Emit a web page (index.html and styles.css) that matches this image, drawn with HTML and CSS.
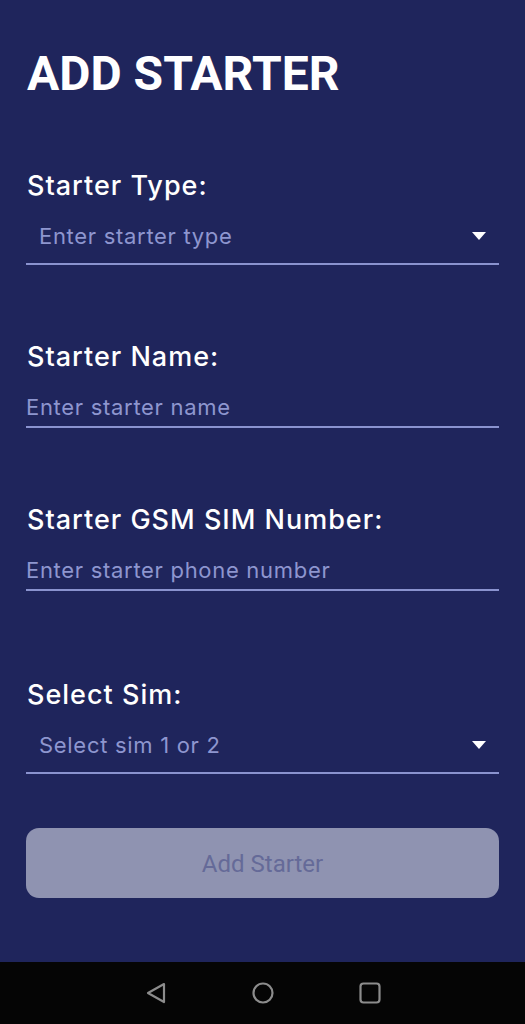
FILE: index.html
```html
<!DOCTYPE html>
<html lang="en">
<head>
  <meta charset="UTF-8" />
  <meta name="viewport" content="width=device-width, initial-scale=1.0" />
  <title>Add Starter</title>
  <link rel="stylesheet" href="styles.css">
</head>
<body>
  <!-- Form -->
  <main class="screen">
    <h1 class="title">ADD STARTER</h1>

    <div class="field">
      <div class="field-label">Starter Type:</div>
      <div class="field-input dropdown">
        <span class="placeholder">Enter starter type</span>
        <span class="arrow"></span>
      </div>
    </div>

    <div class="field">
      <div class="field-label">Starter Name:</div>
      <div class="field-input">
        <span class="placeholder">Enter starter name</span>
      </div>
    </div>

    <div class="field">
      <div class="field-label">Starter GSM SIM Number:</div>
      <div class="field-input">
        <span class="placeholder">Enter starter phone number</span>
      </div>
    </div>

    <div class="field field-sim">
      <div class="field-label">Select Sim:</div>
      <div class="field-input dropdown">
        <span class="placeholder">Select sim 1 or 2</span>
        <span class="arrow"></span>
      </div>
    </div>

    <button class="submit-button" disabled>Add Starter</button>
  </main>

  <!-- Barra di navigazione -->
  <nav class="nav-bar">
    <svg width="24" height="24" viewBox="0 0 24 24"><path d="M20 3 L4 12 L20 21 Z" fill="none" stroke="#8c8c8c" stroke-width="2.2" stroke-linejoin="round"/></svg>
    <svg width="24" height="24" viewBox="0 0 24 24"><circle cx="12" cy="12" r="9.5" fill="none" stroke="#8c8c8c" stroke-width="2.2"/></svg>
    <svg width="24" height="24" viewBox="0 0 24 24"><rect x="2.5" y="2.5" width="19" height="19" rx="3" fill="none" stroke="#8c8c8c" stroke-width="2.2"/></svg>
  </nav>
</body>
</html>
```

FILE: styles.css
```css
body {
  margin: 0;
  height: 1024px;
  background-color: #1f255c;
  font-family: Inter, "Noto Sans", sans-serif;
  display: flex;
  flex-direction: column;
  overflow: hidden;
}

.screen {
  flex: 1;
  padding: 46px 26px 0 26px;
}

.title {
  margin: 0 0 0 1px;
  font-family: Roboto, sans-serif;
  font-weight: 700;
  font-size: 48px;
  line-height: 56px;
  color: #fff;
}

.field {
  margin-top: 68px;
}

.field + .field {
  margin-top: 76px;
}

.field.field-sim {
  margin-top: 88px;
}

.field-label {
  font-size: 27px;
  font-weight: 500;
  line-height: 32px;
  color: #fff;
  letter-spacing: 1px;
  margin-left: 1px;
}

.field-input {
  margin-top: 20px;
  display: flex;
  align-items: center;
  padding-bottom: 5px;
  border-bottom: 2px solid #8a93cf;
}

.field-input.dropdown {
  padding: 0 13px 13px 13px;
}

.placeholder {
  flex: 1;
  font-size: 22px;
  line-height: 28px;
  color: #8e96cf;
  letter-spacing: 0.7px;
}

.arrow {
  width: 0;
  height: 0;
  border-left: 7px solid transparent;
  border-right: 7px solid transparent;
  border-top: 8px solid #fff;
}

.submit-button {
  display: block;
  width: 100%;
  height: 70px;
  margin-top: 54px;
  background-color: #8f93b1;
  color: #656a98;
  border: none;
  border-radius: 13px;
  font-family: Roboto, sans-serif;
  font-size: 24px;
  padding-top: 2px;
}

.nav-bar {
  height: 62px;
  background-color: #050505;
  display: flex;
  align-items: center;
  justify-content: center;
  gap: 83px;
}
```
